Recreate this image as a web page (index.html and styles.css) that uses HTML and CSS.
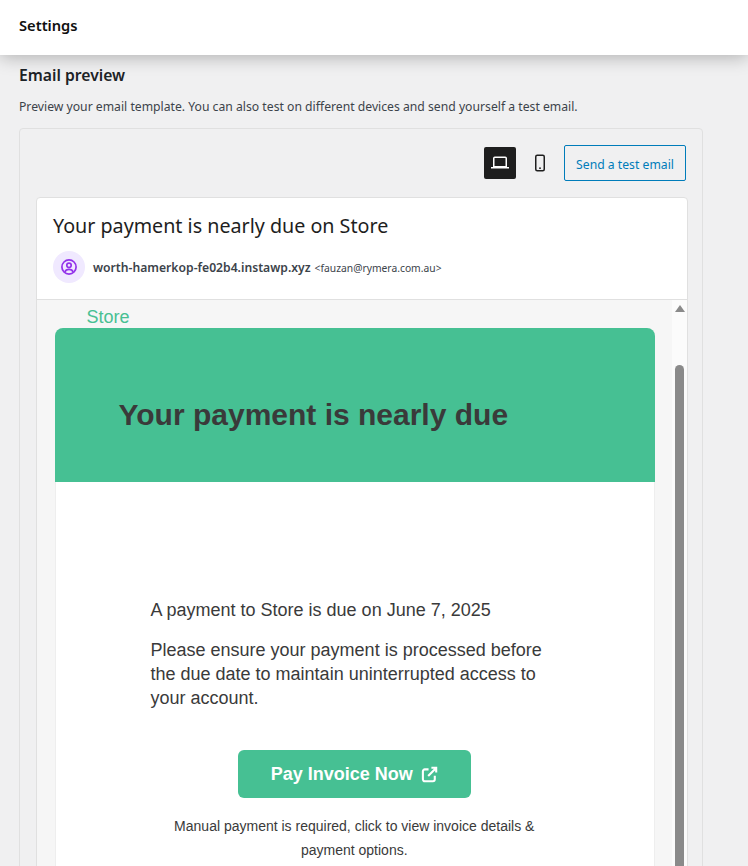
FILE: index.html
```html
<!DOCTYPE html>
<html lang="en">
<head>
<meta charset="utf-8">
<title>Email preview</title>
<link rel="stylesheet" href="styles.css">
</head>
<body>
<header class="topbar"><h1 class="topbar-title">Settings</h1></header>
<main class="content">
  <h2 class="section-title">Email preview</h2>
  <p class="section-desc">Preview your email template. You can also test on different devices and send yourself a test email.</p>
  <section class="panel">
    <div class="toolbar">
      <button class="device device-active" aria-label="Desktop">
        <svg width="24" height="24" viewBox="0 0 24 24" fill="none" stroke="#fff" stroke-width="1.5"><path d="M5.75 7.25c0-.55.45-1 1-1h10.5c.55 0 1 .45 1 1v8.5H5.75z"/><path d="M3 16.75h18" stroke-width="1.5"/></svg>
      </button>
      <button class="device" aria-label="Mobile">
        <svg width="24" height="24" viewBox="0 0 24 24" fill="none"><rect x="7.75" y="4.25" width="8.5" height="15.5" rx="1.5" stroke="#1e1e1e" stroke-width="1.5"/><rect x="11.2" y="16.4" width="1.6" height="1.6" fill="#1e1e1e"/></svg>
      </button>
      <button class="test-btn">Send a test email</button>
    </div>
    <div class="mail">
      <div class="mail-head">
        <h3 class="mail-subject">Your payment is nearly due on Store</h3>
        <div class="sender">
          <span class="avatar">
            <svg width="18" height="18" viewBox="0 0 18 18" fill="none" stroke="#9333ea" stroke-width="1.7"><circle cx="9" cy="9" r="7.1"/><circle cx="9" cy="7.3" r="2.2"/><path d="M4.9 14c.6-1.7 2.2-2.6 4.1-2.6s3.5.9 4.1 2.6"/></svg>
          </span>
          <strong class="sender-name">worth-hamerkop-fe02b4.instawp.xyz</strong>
          <span class="sender-mail">&lt;fauzan@rymera.com.au&gt;</span>
        </div>
      </div>
      <div class="mail-view">
        <div class="mail-body">
          <div class="store">Store</div>
          <div class="hero"><div class="hero-title">Your payment is nearly due</div></div>
          <div class="message">
            <p class="msg-line">A payment to Store is due on June 7, 2025</p>
            <p class="msg-para">Please ensure your payment is processed before the due date to maintain uninterrupted access to your account.</p>
            <div class="cta-row">
              <a class="cta">Pay Invoice Now
                <svg width="17" height="17" viewBox="0 0 18 18" fill="none" stroke="#fff" stroke-width="2.2"><path d="M14.6 10.4v3.7a2 2 0 0 1-2 2H4a2 2 0 0 1-2-2V5.6a2 2 0 0 1 2-2h4"/><path d="M7.6 10.5 16 2.1M11 1.9h5.1V7"/></svg>
              </a>
            </div>
            <p class="note">Manual payment is required, click to view invoice details &amp; payment options.</p>
          </div>
        </div>
        <div class="scrollbar">
          <span class="arrow"></span>
          <span class="thumb"></span>
        </div>
      </div>
    </div>
  </section>
</main>
</body>
</html>
```
FILE: styles.css
```css
* { box-sizing: border-box; }
html, body { margin: 0; height: 866px; overflow: hidden; }
body { background: #f0f0f1; font-family: "Noto Sans", "Open Sans", sans-serif; color: #1e1e1e; }

.topbar { height: 55px; background: #fff; padding: 0 19px 6px; display: flex; align-items: center; box-shadow: 0 2px 18px rgba(0,0,0,.28); position: relative; }
.topbar-title { margin: 0; font-size: 14.7px; font-weight: 600; color: #101010; }

.content { padding: 0 19px; }
.section-title { margin: 9px 0 0; font-size: 15.7px; line-height: 22px; font-weight: 600; color: #1d2327; }
.section-desc { margin: 11px 0 0; font-size: 12.2px; line-height: 20px; color: #3c434a; }

.panel { margin-top: 11px; width: 684px; height: 760px; border: 1px solid #e0e0e0; border-radius: 4px; padding: 16px; background: #f0f0f1; }
.toolbar { display: flex; justify-content: flex-end; align-items: center; gap: 8px; height: 36px; }
.device { width: 32px; height: 32px; border: 0; border-radius: 2px; background: transparent; padding: 0; display: flex; align-items: center; justify-content: center; }
.device-active { background: #1e1e1e; }
.test-btn { height: 36px; width: 122px; border: 1px solid #007cba; border-radius: 2px; background: transparent; color: #007cba; font: 12.2px "Noto Sans", sans-serif; padding: 2px 0 0; }

.mail { margin-top: 16px; width: 652px; border: 1px solid #e0e0e0; border-radius: 4px; background: #fff; }
.mail-head { padding: 16px 16px 0; height: 102px; border-bottom: 1px solid #e0e0e0; }
.mail-subject { margin: 0; font-size: 19.7px; line-height: 24px; font-weight: 400; color: #1e1e1e; }
.sender { display: flex; align-items: center; margin-top: 13px; }
.avatar { width: 32px; height: 32px; border-radius: 50%; background: #f0e9ff; display: flex; align-items: center; justify-content: center; margin-right: 8px; }
.sender-name { font-size: 12.17px; font-weight: 600; color: #3c434a; margin-right: 4px; }
.sender-mail { font-size: 10.3px; color: #3c434a; padding-top: 1px; }

.mail-view { display: flex; height: 600px; }
.mail-body { width: 635px; background: #f6f6f6; padding: 6px 18px 0; font-family: "Liberation Sans", Arial, sans-serif; color: #3a3a3a; }
.store { font-size: 18px; line-height: 22px; color: #48c093; margin-left: 31.5px; }
.hero { width: 600px; height: 154px; background: #46c093; border-radius: 8px 8px 0 0; padding: 20px 63.5px 0; display: flex; align-items: center; }
.hero-title { font-size: 30px; font-weight: 700; color: #3a3a3a; }
.message { width: 600px; height: 420px; background: #fff; padding: 116px 96px 0 94.5px; border: solid #eeeeee; border-width: 0 1px; }
.msg-line { margin: 0; font-size: 18px; line-height: 24px; }
.msg-para { margin: 16px 0 0; font-size: 18px; line-height: 24px; }
.cta-row { display: flex; justify-content: center; margin-top: 40px; }
.cta { width: 233px; height: 48px; flex: none; border-radius: 6px; background: #46c093; color: #fff; font-size: 18px; font-weight: 700; display: flex; align-items: center; justify-content: center; gap: 8px; }
.note { margin: 16px 0 0; font-size: 14px; line-height: 24px; text-align: center; }

.scrollbar { width: 15px; background: #fbfbfb; position: relative; }
.arrow { position: absolute; left: 3px; top: 5px; width: 0; height: 0; border: solid transparent; border-width: 0 5px 7px; border-bottom-color: #8a8a8a; }
.thumb { position: absolute; left: 3px; top: 65px; width: 9px; height: 600px; background: #8a8a8a; border-radius: 5px; }
```
